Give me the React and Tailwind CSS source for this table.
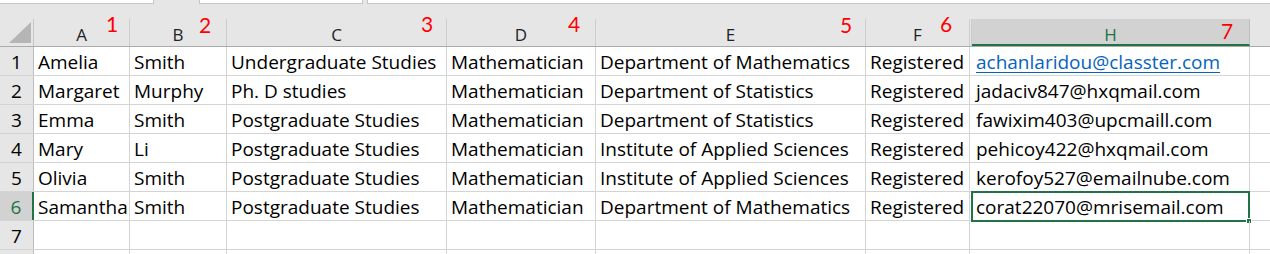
const widths = [
  "w-[96px]",
  "w-[97px]",
  "w-[220px]",
  "w-[149px]",
  "w-[270px]",
  "w-[104px]",
];

const letters = ["A", "B", "C", "D", "E", "F"];

const rows = [
  ["Amelia", "Smith", "Undergraduate Studies", "Mathematician", "Department of Mathematics", "Registered", "achanlaridou@classter.com"],
  ["Margaret", "Murphy", "Ph. D studies", "Mathematician", "Department of Statistics", "Registered", "jadaciv847@hxqmail.com"],
  ["Emma", "Smith", "Postgraduate Studies", "Mathematician", "Department of Statistics", "Registered", "fawixim403@upcmaill.com"],
  ["Mary", "Li", "Postgraduate Studies", "Mathematician", "Institute of Applied Sciences", "Registered", "pehicoy422@hxqmail.com"],
  ["Olivia", "Smith", "Postgraduate Studies", "Mathematician", "Institute of Applied Sciences", "Registered", "kerofoy527@emailnube.com"],
  ["Samantha", "Smith", "Postgraduate Studies", "Mathematician", "Department of Mathematics", "Registered", "corat22070@mrisemail.com"],
  ["", "", "", "", "", "", ""],
  ["", "", "", "", "", "", ""],
];

const marks = [
  { n: "1", cls: "left-[106px] top-[13px]" },
  { n: "2", cls: "left-[199px] top-[14px]" },
  { n: "3", cls: "left-[421px] top-[13px]" },
  { n: "4", cls: "left-[568px] top-[13px]" },
  { n: "5", cls: "left-[840px] top-[14px]" },
  { n: "6", cls: "left-[940px] top-[13px]" },
  { n: "7", cls: "left-[1221px] top-[20px]" },
];

function Cell({ children, w, className = "" }) {
  return (
    <div
      className={`${w} shrink-0 h-full border-r border-[#d4d4d4] pl-[4px] pt-[3px] leading-[24px] whitespace-nowrap overflow-hidden ${className}`}
    >
      {children}
    </div>
  );
}

export default function App() {
  return (
    <div className="relative w-[1270px] h-[254px] overflow-hidden bg-[#e6e6e6] font-['Open_Sans',sans-serif] text-black">
      {/* formula bar edge */}
      <div className="flex h-[4px]">
        <div className="w-[154px] bg-white border-b border-r border-[#c6c6c6]" />
        <div className="w-[45px]" />
        <div className="w-[164px] bg-white border-b border-x border-[#c6c6c6]" />
        <div className="w-[4px]" />
        <div className="flex-1 bg-white border-b border-l border-[#c6c6c6]" />
      </div>
      <div className="h-[15px]" />

      {/* column headers */}
      <div className="flex h-[28px] border-b border-[#ababab] text-[17px] text-[#222]">
        <div className="w-[34px] shrink-0 h-full border-r border-[#c6c6c6] flex items-end justify-end pr-[2px] pb-[3px]">
          <svg width="22" height="21" viewBox="0 0 22 21">
            <polygon points="22,0 22,21 0,21" fill="#b5b5b5" />
          </svg>
        </div>
        {letters.map((l, i) => (
          <div
            key={l}
            className={`${widths[i]} shrink-0 h-full border-r border-[#cdcdcd] flex justify-center pt-[6px] leading-[20px]`}
          >
            {l}
          </div>
        ))}
        <div className="w-[2px] shrink-0 h-full border-r border-[#cdcdcd]" />
        <div className="w-[278px] shrink-0 h-full bg-[#d2d2d2] border-r border-[#bdbdbd] border-b-2 border-b-[#217346] flex justify-center pt-[6px] leading-[20px] text-[#217346]">
          H
        </div>
        <div className="flex-1" />
      </div>

      {/* data rows */}
      {rows.map((r, ri) => {
        const sel = ri === 5;
        return (
          <div key={ri} className="flex h-[29px] border-b border-[#d4d4d4] bg-white text-[19px]">
            <div
              className={`w-[34px] shrink-0 h-full flex justify-center pt-[3px] leading-[24px] ${
                sel
                  ? "bg-[#d2d2d2] text-[#217346] border-r-2 border-[#217346]"
                  : "bg-[#e6e6e6] border-r border-[#bdbdbd]"
              }`}
            >
              {ri < 7 ? ri + 1 : ""}
            </div>
            {r.slice(0, 6).map((v, ci) => (
              <Cell key={ci} w={widths[ci]}>
                {v}
              </Cell>
            ))}
            <div className="w-[2px] shrink-0 h-full" />
            <div className="relative w-[278px] shrink-0 h-full border-r border-[#d4d4d4] pl-[4px] pt-[3px] leading-[24px] whitespace-nowrap">
              {ri === 0 ? (
                <span className="text-[#0563c1] underline underline-offset-[3px]">{r[6]}</span>
              ) : (
                r[6]
              )}
              {sel && (
                <div className="absolute -left-[1px] -top-[1px] w-[279px] h-[31px] border-2 border-[#217346]">
                  <div className="absolute -right-[4px] -bottom-[4px] w-[6px] h-[6px] bg-[#217346] border border-white" />
                </div>
              )}
            </div>
            <div className="flex-1 h-full" />
          </div>
        );
      })}

      {/* red annotations */}
      {marks.map((m) => (
        <div key={m.n} className={`absolute ${m.cls} font-[Lato,sans-serif] text-[21px] leading-[21px] text-[#ff0000]`}>
          {m.n}
        </div>
      ))}
    </div>
  );
}
